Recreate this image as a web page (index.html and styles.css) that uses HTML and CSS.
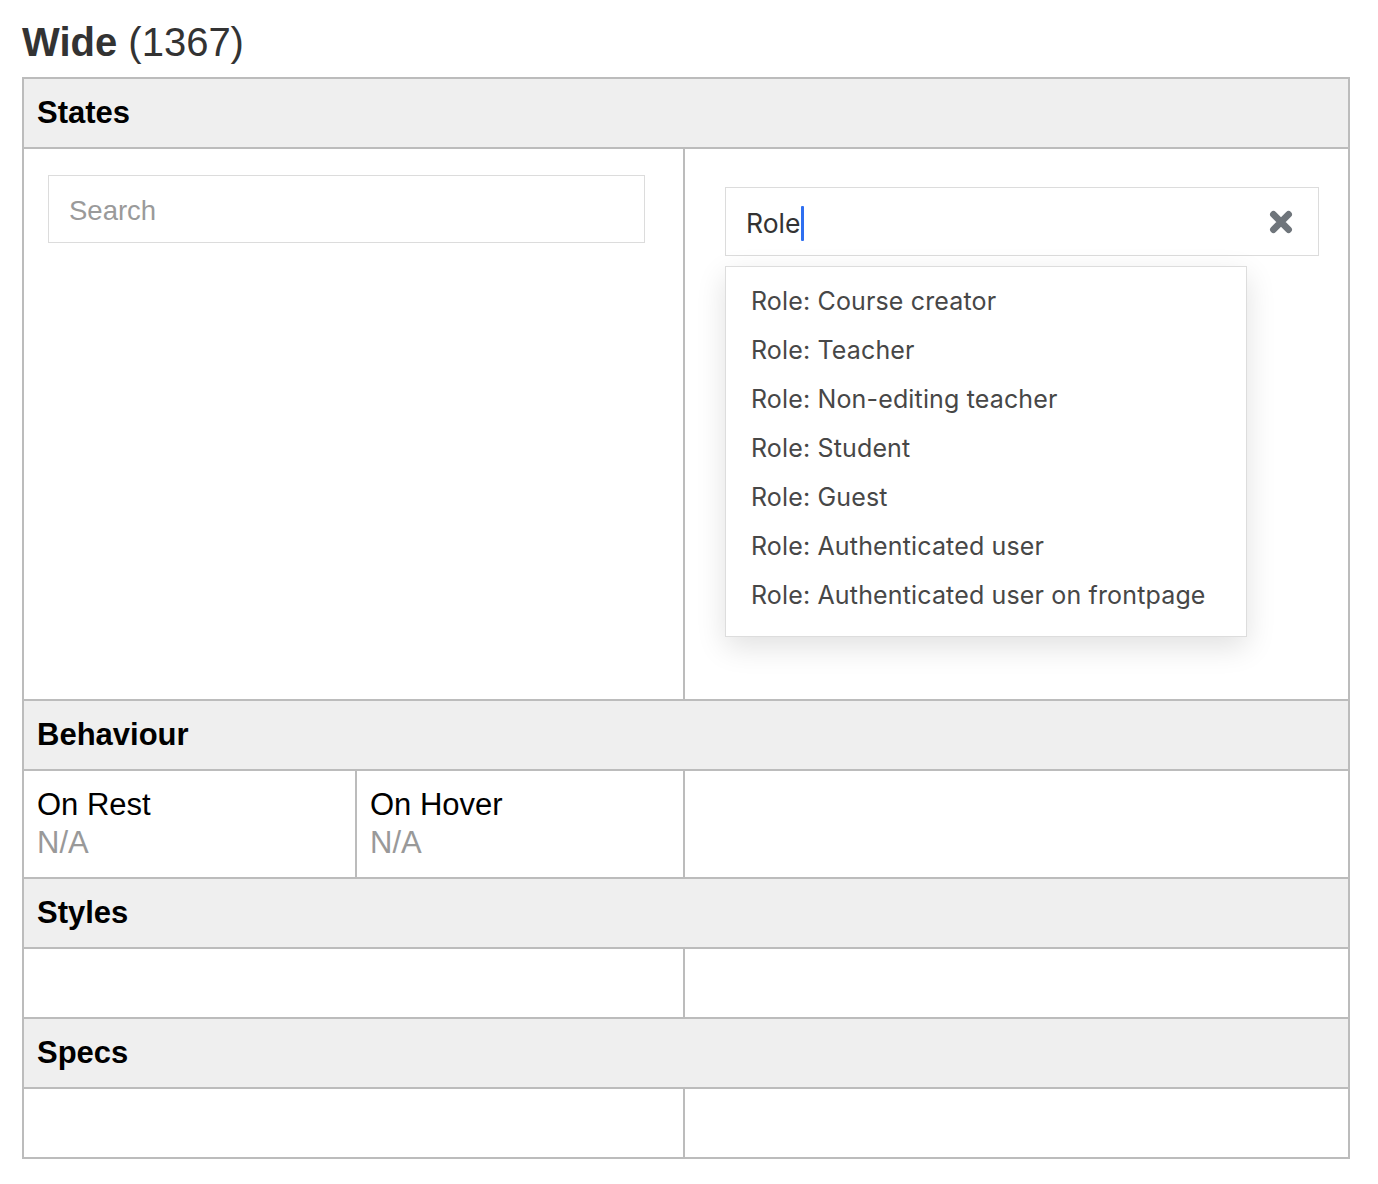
FILE: index.html
```html
<!DOCTYPE html>
<html lang="en">
<head>
<meta charset="utf-8">
<title>Wide (1367)</title>
<link rel="stylesheet" href="styles.css">
</head>
<body>
<main class="page">
  <h1 class="title"><strong>Wide</strong> (1367)</h1>
  <div class="spec">
    <div class="head">States</div>
    <div class="cell states-left">
      <div class="field search"><span class="placeholder">Search</span></div>
    </div>
    <div class="cell states-right">
      <div class="combo">
        <div class="field role">
          <span class="value">Role<span class="caret"></span></span>
          <svg class="clear" viewBox="0 0 24 24" width="26" height="26" aria-hidden="true">
            <path d="M5 5 L19 19 M19 5 L5 19" stroke="#6f757b" stroke-width="6.2" stroke-linecap="round" fill="none"/>
          </svg>
        </div>
        <ul class="menu">
          <li>Role: Course creator</li>
          <li>Role: Teacher</li>
          <li>Role: Non-editing teacher</li>
          <li>Role: Student</li>
          <li>Role: Guest</li>
          <li>Role: Authenticated user</li>
          <li>Role: Authenticated user on frontpage</li>
        </ul>
      </div>
    </div>

    <div class="head">Behaviour</div>
    <div class="cell behave">
      <div class="label">On Rest</div>
      <div class="na">N/A</div>
    </div>
    <div class="cell behave">
      <div class="label">On Hover</div>
      <div class="na">N/A</div>
    </div>
    <div class="cell"></div>

    <div class="head">Styles</div>
    <div class="cell half"></div>
    <div class="cell"></div>

    <div class="head">Specs</div>
    <div class="cell half"></div>
    <div class="cell"></div>
  </div>
</main>
</body>
</html>
```

FILE: styles.css
```css
html, body {
  margin: 0;
  padding: 0;
  background: #ffffff;
}

.page {
  padding: 19px 0 0 22px;
  font-family: "Liberation Sans", Arial, Helvetica, sans-serif;
}

.title {
  margin: 0 0 12px 0;
  font-size: 40px;
  line-height: 46px;
  font-weight: 400;
  color: #333333;
}

.title strong {
  font-weight: 700;
}

.spec {
  width: 1324px;
  display: grid;
  grid-template-columns: 331px 326px 663px;
  grid-template-rows: 68px 550px 68px 106px 68px 68px 68px 68px;
  gap: 2px;
  background: #bcbcbc;
  border: 2px solid #bcbcbc;
}

.head {
  grid-column: 1 / -1;
  background: #efefef;
  display: flex;
  align-items: center;
  padding-left: 13px;
  font-size: 31px;
  font-weight: 700;
  color: #000000;
}

.cell {
  background: #ffffff;
  min-width: 0;
}

.half,
.states-left {
  grid-column: 1 / 3;
}

.states-left {
  padding: 26px 0 0 24px;
}

.states-right {
  padding: 38px 0 0 40px;
}

.field {
  box-sizing: border-box;
  border: 1px solid #dcdcdc;
  background: #ffffff;
  display: flex;
  align-items: center;
}

.search {
  width: 597px;
  height: 68px;
  padding: 3px 0 0 20px;
  font-size: 27.5px;
  color: #9a9a9a;
}

.combo {
  position: relative;
  width: 594px;
}

.role {
  height: 69px;
  padding: 3px 24px 0 20px;
  justify-content: space-between;
  font-family: Inter, "Noto Sans", sans-serif;
  font-size: 26.5px;
  color: #333333;
}

.value {
  display: inline-flex;
  align-items: center;
}

.caret {
  display: inline-block;
  width: 3px;
  height: 35px;
  margin-left: 1px;
  background: #2f6ff0;
  border-radius: 1px;
}

.clear {
  display: block;
  margin-top: -3px;
}

.menu {
  position: absolute;
  top: 79px;
  left: 0;
  width: 522px;
  box-sizing: border-box;
  margin: 0;
  padding: 10px 0 16px 0;
  list-style: none;
  background: #ffffff;
  border: 1px solid #dddddd;
  box-shadow: 0 10px 28px rgba(0, 0, 0, 0.12);
  font-family: Inter, "Noto Sans", sans-serif;
  font-size: 25px;
  color: #474747;
}

.menu li {
  height: 49px;
  line-height: 49px;
  padding-left: 25px;
  white-space: nowrap;
  letter-spacing: 0.15px;
}

.behave {
  padding: 15px 13px 0 13px;
  font-size: 31px;
  line-height: 38px;
}

.label {
  color: #000000;
}

.na {
  color: #999999;
}
```
